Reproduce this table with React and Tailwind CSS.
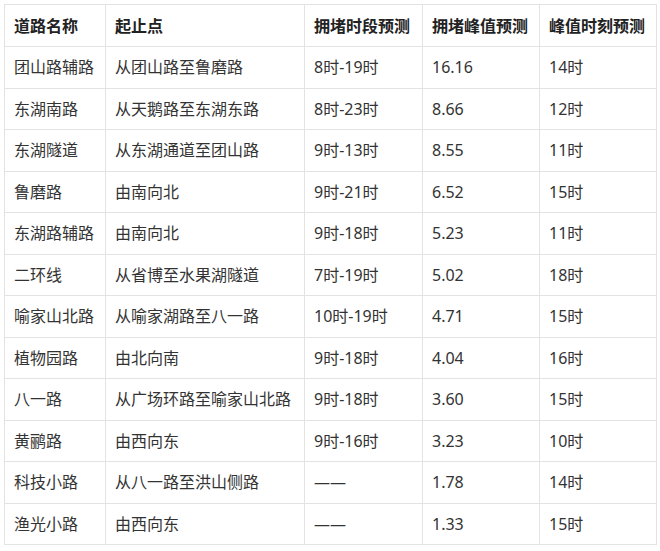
import React from 'react';

const rows = [
  ['团山路辅路', '从团山路至鲁磨路', '8时-19时', '16.16', '14时'],
  ['东湖南路', '从天鹅路至东湖东路', '8时-23时', '8.66', '12时'],
  ['东湖隧道', '从东湖通道至团山路', '9时-13时', '8.55', '11时'],
  ['鲁磨路', '由南向北', '9时-21时', '6.52', '15时'],
  ['东湖路辅路', '由南向北', '9时-18时', '5.23', '11时'],
  ['二环线', '从省博至水果湖隧道', '7时-19时', '5.02', '18时'],
  ['喻家山北路', '从喻家湖路至八一路', '10时-19时', '4.71', '15时'],
  ['植物园路', '由北向南', '9时-18时', '4.04', '16时'],
  ['八一路', '从广场环路至喻家山北路', '9时-18时', '3.60', '15时'],
  ['黄鹂路', '由西向东', '9时-16时', '3.23', '10时'],
  ['科技小路', '从八一路至洪山侧路', '——', '1.78', '14时'],
  ['渔光小路', '由西向东', '——', '1.33', '15时'],
];

const headers = ['道路名称', '起止点', '拥堵时段预测', '拥堵峰值预测', '峰值时刻预测'];
const widths = ['w-[101px]', 'w-[199px]', 'w-[118px]', 'w-[117px]', 'w-[117px]'];

export default function App() {
  return (
    <div
      className="bg-white w-[660px] h-[551px] pt-[4px] pl-[4px]"
      style={{ fontFamily: '"Noto Sans", "Noto Sans CJK SC", sans-serif' }}
    >
      <table className="border-collapse table-fixed w-[652px] text-[16px] text-[#333]">
        <thead>
          <tr className="h-[42px]">
            {headers.map((h, i) => (
              <th
                key={h}
                className={`${widths[i]} border border-[#e3e3e3] px-[9px] text-left font-bold text-[#222]`}
              >
                {h}
              </th>
            ))}
          </tr>
        </thead>
        <tbody>
          {rows.map(row => (
            <tr key={row[0]} className="h-[41.5px]">
              {row.map((cell, i) => (
                <td key={i} className="border border-[#e3e3e3] px-[9px] whitespace-nowrap">
                  {cell}
                </td>
              ))}
            </tr>
          ))}
        </tbody>
      </table>
    </div>
  );
}
